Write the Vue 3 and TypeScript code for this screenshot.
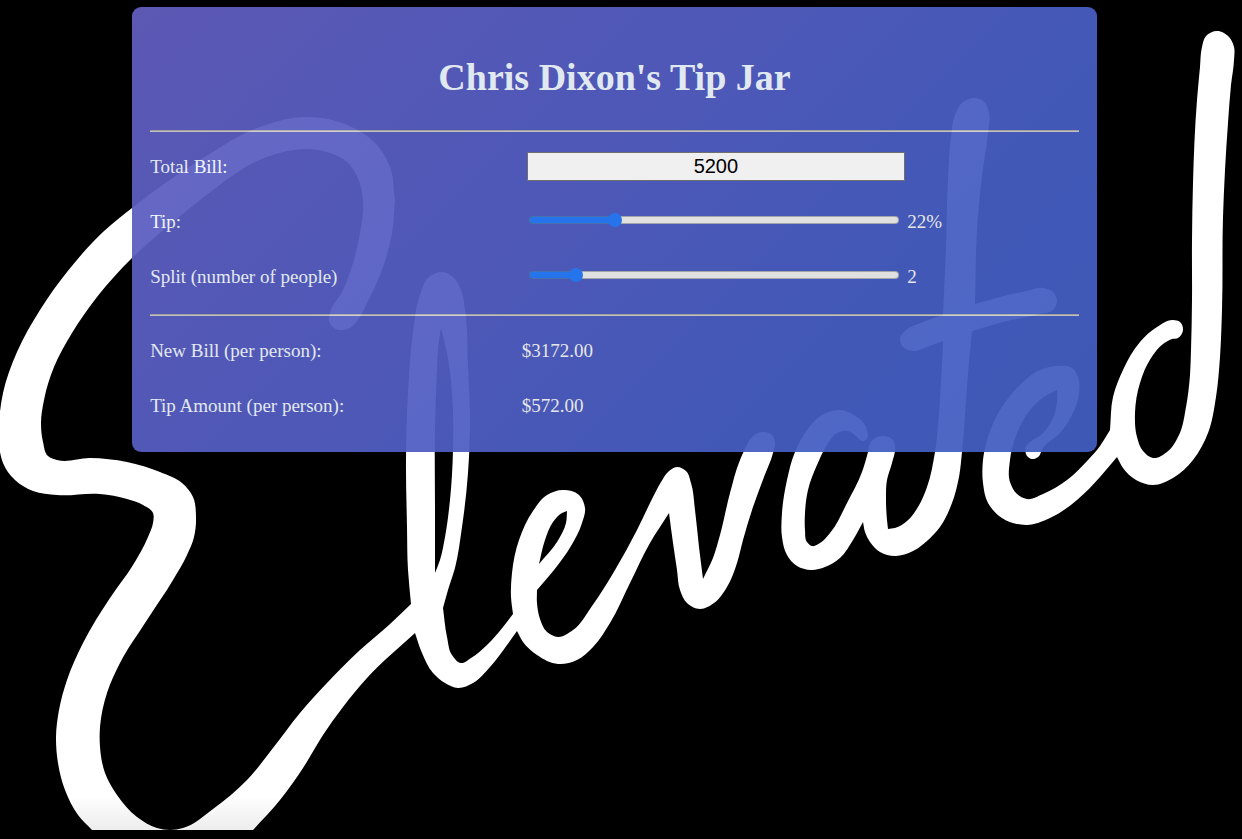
<script setup lang="ts">
import { computed, ref } from 'vue'

type Point = [number, number]

const bill = ref(5200)
const tipPercent = ref(22)
const people = ref(2)

const tipPerPerson = computed(() => (bill.value * tipPercent.value) / 100 / people.value)
const billPerPerson = computed(() => bill.value / people.value + tipPerPerson.value)
const money = (amount: number) => '$' + amount.toFixed(2)

const tipFill = computed(() => ({ '--fill': tipPercent.value / 100 }))
const peopleFill = computed(() => ({ '--fill': (people.value - 1) / 9 }))

/* Brush edges of the backdrop: smooth runs of points, a bar marks a sharp corner. */
const longStroke = `395,200 390,167 377,145 347,125 307,117 260,127 200,160 132,208 103,232 67,272 40,310 17,352 3,393 -1,425
 0,452 3,463 15,480 33,491 57,495 100,494 127,499 143,505 153,513 153,523 148,537 133,565 110,598 83,643 67,680 59,710 56,737 58,763 65,790 78,815 92,830 |
 253,830 | 280,800 303,768 323,735 343,707 367,678 415,633 |
 422,653 433,673 445,683 458,688 473,683 490,667 507,645 517,631 |
 523,642 537,655 558,664 577,660 593,647 610,623 630,583 650,543 669,513 |
 673,543 677,570 680,590 687,603 700,609 714,603 727,587 737,563 743,540 753,507 764,477 773,453 775,443 772,435 762,432 752,437 747,445 740,460 730,493 720,535 713,558 703,579 |
 699,547 695,510 691,483 686,471 677,467 668,472 661,482 653,497 637,530 615,570 592,606 573,630 558,637 547,632 540,619 537,603 537,590 |
 554,570 571,546 582,523 585,508 579,495 563,490 547,495 533,511 519,540 512,573 511,597 513,614 |
 503,627 487,645 471,658 461,663 452,655 447,637 443,608 |
 448,590 455,568 462,527 468,473 470,420 468,367 465,310 461,290 453,277 442,272 429,277 420,295 413,333 408,393 406,460 407,527 408,570 411,604 |
 389,625 360,650 327,683 300,713 273,748 247,780 213,809 183,828 170,830 157,828 137,817 117,795 105,773 100,747 100,727 107,693 120,663 147,620 173,580 187,555 194,537 196,517 193,497 182,483 160,472 127,462 90,458
 57,460 48,456 43,442 41,423 44,400 54,367 72,333 97,297 132,258 173,222 217,187 253,163 283,152 307,149 330,153 347,162 357,176 363,200 360,233 353,263 343,290 330,313 329,321 334,328 342,330 350,328 356,322 370,297 383,267 392,233 395,200`
const tallLoopGap = `441,328 447,353 452,393 453,450 450,500 445,537 440,560 435,573 | 435,510 435,427 437,370 439,340 441,328`
const smallLoopGap = `539,564 545,540 553,522 562,513 567,511 | 566,523 557,542 539,564`
const crossedStroke = `868,435 867,439 862,441 857,437 848,431 837,433 827,445 817,465 808,490 805,513 805,530 807,542 812,546 820,543 830,533 847,503 862,472 868,452 870,443 875,438 883,436 893,440 895,447 892,463 887,480 886,500 887,520 888,529 |
 895,528 907,521 918,507 927,487 935,452 939,413 942,363 943,341 |
 927,347 913,351 903,347 900,338 905,331 923,322 943,315 |
 946,247 948,180 951,137 955,115 963,102 975,98 985,103 989,113 988,133 982,175 977,230 975,304 |
 1000,297 1027,291 1043,288 1053,292 1057,301 1053,310 1040,314 1007,321 972,331 |
 968,373 962,452 959,477 952,503 940,527 927,541 913,551 895,556 880,552 870,542 865,532 863,522 |
 853,540 840,558 825,567 811,570 797,566 787,555 782,537 782,513 787,480 795,452 807,430 822,415 840,410 857,417 865,425 868,435`
const lastStroke = `1025,448 1027,456 1032,459 1038,457 1043,448 1060,433 1073,413 1079,393 1078,377 1072,368 1057,366 1040,370 1020,385 1000,410 988,437 983,460 983,483 988,503 1002,518 1027,525 1050,518 1077,500 1100,477 1117,457 |
 1123,468 1136,480 1153,485 1173,478 1193,460 1208,433 1216,397 1220,357 1222,310 1223,217 1225,170 1228,123 1231,85 1234,60 1234,47 1229,37 1217,31 1206,36 1202,47 1200,67 1197,100 1193,183 1192,240 1192,300 1191,350 1190,375 1186,407 1179,435 1167,452 1153,458 1143,451 1137,437 1135,413 1140,383 1151,358 1163,344 1172,339 1178,338 1183,330 1180,322 1173,320 1157,327 1140,342 1123,370 1113,397 1110,430 |
 1100,446 1088,460 1067,480 1043,494 1027,499 1017,494 1010,482 1010,460 1017,433 1030,410 1044,397 1057,390 |
 1057,402 1053,418 1043,433 1027,445 1025,448`

const distance = (a: Point, b: Point) => Math.hypot(b[0] - a[0], b[1] - a[1])

/* Direction of the curve at a point; the nearer neighbour weighs more. */
function tangent(before: Point | undefined, at: Point, after: Point | undefined): Point {
  const a = before ?? at
  const b = after ?? at
  const near = before ? distance(a, at) : 1
  const far = after ? distance(at, b) : 1
  const x = ((at[0] - a[0]) * far) / near + ((b[0] - at[0]) * near) / far
  const y = ((at[1] - a[1]) * far) / near + ((b[1] - at[1]) * near) / far
  const size = Math.hypot(x, y) || 1
  return [x / size, y / size]
}

function outline(source: string): string {
  let corner: Point | null = null
  let d = ''
  for (const run of source.split('|')) {
    const points = run.trim().split(/\s+/).map((pair) => pair.split(',').map(Number) as Point)
    if (corner) points.unshift(corner)
    else d = `M${points[0].join(' ')}`
    for (let i = 0; i < points.length - 1; i++) {
      const start = points[i]
      const end = points[i + 1]
      const reach = distance(start, end) / 3
      const leave = tangent(points[i - 1], start, end)
      const arrive = tangent(start, end, points[i + 2])
      const c1 = [start[0] + leave[0] * reach, start[1] + leave[1] * reach]
      const c2 = [end[0] - arrive[0] * reach, end[1] - arrive[1] * reach]
      d += `C${[...c1, ...c2, ...end].map((n) => n.toFixed(1)).join(' ')}`
    }
    corner = points[points.length - 1]
  }
  return d + 'Z'
}

const brushWork = [longStroke, tallLoopGap, smallLoopGap].map(outline).join('')
const brushEnd = [crossedStroke, lastStroke].map(outline)
</script>

<template>
  <main class="page">
    <svg class="backdrop" viewBox="0 0 1242 839" preserveAspectRatio="xMidYMid slice" aria-hidden="true">
      <defs>
        <linearGradient id="ink" gradientUnits="userSpaceOnUse" x1="0" y1="795" x2="0" y2="830">
          <stop offset="0" stop-color="#fff" />
          <stop offset="1" stop-color="#ededed" />
        </linearGradient>
      </defs>
      <path :d="brushWork" fill="url(#ink)" fill-rule="evenodd" />
      <path v-for="(d, index) in brushEnd" :key="index" :d="d" fill="#fff" />
    </svg>

    <section class="card">
      <h1>Chris Dixon's Tip Jar</h1>
      <hr />
      <form class="inputs" @submit.prevent>
        <div class="row">
          <label for="bill">Total Bill:</label>
          <input id="bill" v-model.number="bill" class="bill" type="text" inputmode="decimal" />
        </div>
        <div class="row">
          <label for="tip">Tip:</label>
          <input id="tip" v-model.number="tipPercent" class="slider" :style="tipFill" type="range" min="0" max="100" />
          <output for="tip">{{ tipPercent }}%</output>
        </div>
        <div class="row">
          <label for="people">Split (number of people)</label>
          <input id="people" v-model.number="people" class="slider" :style="peopleFill" type="range" min="1" max="10" />
          <output for="people">{{ people }}</output>
        </div>
      </form>
      <hr />
      <dl class="results">
        <div class="row">
          <dt>New Bill (per person):</dt>
          <dd>{{ money(billPerPerson) }}</dd>
        </div>
        <div class="row">
          <dt>Tip Amount (per person):</dt>
          <dd>{{ money(tipPerPerson) }}</dd>
        </div>
      </dl>
    </section>
  </main>
</template>

<style>
body {
  margin: 0;
  background: #000;
}
</style>

<style scoped>
.page {
  position: relative;
  box-sizing: border-box;
  min-height: 100vh;
  padding: 7px 13px 8px 0;
  overflow: hidden;
  background: #000;
  font-family: "Liberation Serif", "Times New Roman", serif;
  font-size: 19px;
  line-height: 22px;
}

.backdrop {
  position: absolute;
  inset: 0;
  width: 100%;
  height: 100%;
}

.card {
  position: relative;
  box-sizing: border-box;
  width: 78.5%;
  margin: 0 auto;
  padding: 18px 18px 19px;
  border-radius: 9px;
  background: linear-gradient(135deg, #625ec0 0%, #555ec3 40%, #465ec3 75%, #425ec2 100%);
  color: #fff;
  opacity: 0.94;
}

h1 {
  margin: 30px 0 31px;
  color: #f0f8ff;
  font-size: 38px;
  line-height: 44px;
  text-align: center;
}

hr {
  height: 0;
  margin: 0;
  border: 0;
  border-top: 1px solid #aaa9a6;
  border-bottom: 1px solid #cfcecc;
}

.inputs {
  padding: 7px 0 10px;
}

.results {
  margin: 0;
  padding-top: 7px;
}

.row {
  display: flex;
  align-items: center;
  height: 55px;
}

label,
dt {
  flex: 0 0 40%;
  color: #f0f8ff;
}

dd {
  margin: 0;
  color: #f5f5f5;
}

output {
  color: #f5f5f5;
}

.bill {
  box-sizing: border-box;
  width: calc(40% + 7px);
  height: 29px;
  margin: 0 0 0 5px;
  padding: 1px 2px;
  border: 1px solid #767676;
  border-radius: 1px;
  background: #fff;
  color: #000;
  font-family: "Liberation Sans", Arial, sans-serif;
  font-size: 20px;
  text-align: center;
}

.slider {
  appearance: none;
  width: calc(40% - 1px);
  height: 14px;
  margin: 0 8px 3px 7px;
  background: none;
}

.slider::-webkit-slider-runnable-track {
  box-sizing: border-box;
  height: 8px;
  border: 1px solid rgba(110, 115, 120, 0.5);
  border-radius: 4px;
  background:
    linear-gradient(#287cfa, #287cfa) left / calc(7px + (100% - 14px) * var(--fill)) 100% no-repeat border-box,
    #efefef;
}

.slider::-webkit-slider-thumb {
  appearance: none;
  width: 14px;
  height: 14px;
  margin-top: -4px;
  border-radius: 50%;
  background: #287cfa;
}
</style>
